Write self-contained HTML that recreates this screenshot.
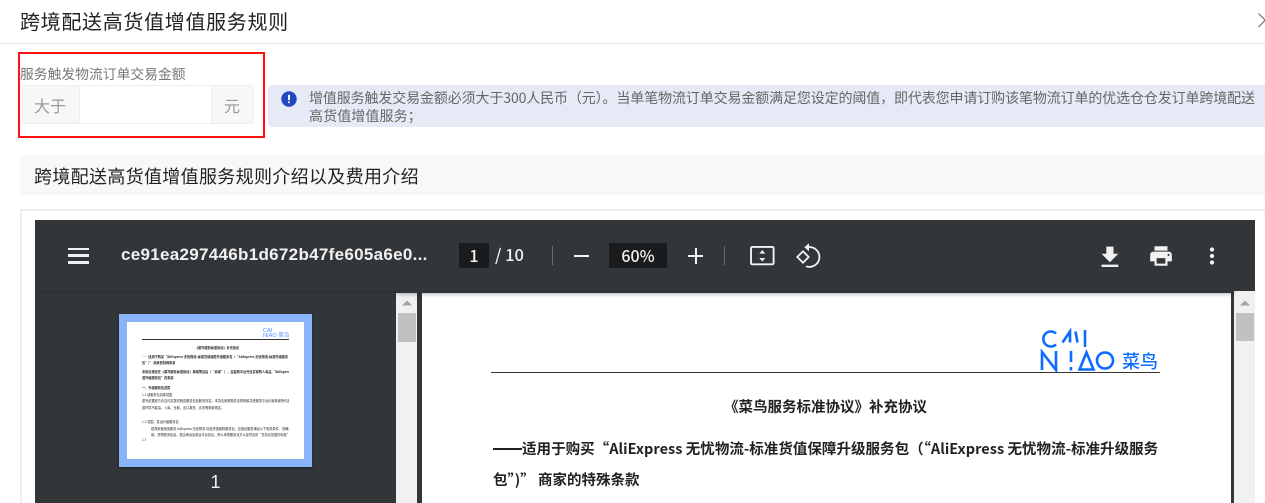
<!DOCTYPE html>
<html lang="zh-CN"><head><meta charset="utf-8"><title>跨境配送高货值增值服务规则</title>
<style>
html,body{margin:0;padding:0;width:1265px;height:503px;overflow:hidden;background:#fff}
body{position:relative;font-family:"Noto Sans CJK SC","Liberation Sans",sans-serif}
div{position:absolute;box-sizing:border-box}
.t{white-space:nowrap}
.m{font-size:3.16px;line-height:5px;color:#222;white-space:nowrap;left:142px;max-width:147px;overflow:hidden}
.b{font-weight:700}
</style></head><body>
<div class="t" style="left:20px;top:6px;font-size:20px;line-height:30px;letter-spacing:.68px;color:#222">跨境配送高货值增值服务规则</div>
<svg style="position:absolute;left:1255px;top:10px" width="10" height="20"><path d="M3.500 3.500L10 10M3.500 17L10 10.500" stroke="#666" stroke-width="1.1" fill="none"/></svg>
<div style="left:0;top:43px;width:1265px;height:1.300px;background:#e8e8e8"></div>

<div style="left:18px;top:52px;width:247px;height:86px;border:2px solid #f11"></div>
<div class="t" style="left:20px;top:63px;font-size:13.800px;line-height:20px;color:#777">服务触发物流订单交易金额</div>
<div style="left:22px;top:85px;width:232px;height:39px;border:1px solid #eee;border-radius:3px;background:#fff"></div>
<div style="left:23px;top:86px;width:57px;height:37px;background:#f7f7f7;border-right:1px solid #eee;border-radius:3px 0 0 3px"></div>
<div style="left:211px;top:86px;width:42px;height:37px;background:#f7f7f7;border-left:1px solid #eee;border-radius:0 3px 3px 0"></div>
<div class="t" style="left:34px;top:93px;font-size:16px;line-height:24px;color:#999">大于</div>
<div class="t" style="left:224px;top:93px;font-size:16px;line-height:24px;color:#999">元</div>

<div style="left:268px;top:85px;width:997px;height:42px;background:#e6eaf6;border-radius:4px 0 0 4px"></div>
<svg style="position:absolute;left:281px;top:91px" width="16" height="16"><circle cx="8" cy="8" r="7.700" fill="#2146c2"/><rect x="7" y="3.600" width="2" height="5.600" rx=".8" fill="#fff"/><rect x="7" y="10.300" width="2" height="2" rx="1" fill="#fff"/></svg>
<div class="t" style="left:309px;top:90px;font-size:14px;line-height:17.500px;color:#666;letter-spacing:-.12px">增值服务触发交易金额必须大于300人民币（元）。当单笔物流订单交易金额满足您设定的阈值，即代表您申请订购该笔物流订单的优选仓仓发订单跨境配送<br><span style="letter-spacing:.1px">高货值增值服务；</span></div>

<div style="left:20px;top:155px;width:1245px;height:40px;background:#f7f8fa"></div>
<div class="t" style="left:34px;top:162px;font-size:18px;line-height:28px;letter-spacing:.33px;color:#222">跨境配送高货值增值服务规则介绍以及费用介绍</div>

<div style="left:20px;top:209px;width:1245px;height:294px;border:2px solid #eee;border-bottom:0;border-right:0"></div>

<!-- PDF viewer -->
<div style="left:35px;top:220px;width:1220px;height:283px;background:#323639;overflow:hidden">
  <div style="left:361px;top:71px;width:21px;height:212px;background:#f1f1f1"></div>
  <div style="left:363px;top:93px;width:18px;height:29px;background:#c1c1c1"></div>
  <svg style="position:absolute;left:364px;top:78px" width="16" height="9"><path d="M3 7.500L8 2.500L13 7.500Z" fill="#a3a3a3"/></svg>

  <div style="left:387px;top:71px;width:809px;height:212px;background:#fff"></div>
  <div style="left:1199px;top:71px;width:21px;height:212px;background:#f1f1f1"></div>
  <div style="left:1201px;top:93px;width:18px;height:28px;background:#c1c1c1"></div>
  <svg style="position:absolute;left:1202px;top:78px" width="16" height="9"><path d="M3 7.500L8 2.500L13 7.500Z" fill="#a3a3a3"/></svg>

  <div style="left:361px;top:0;width:838px;height:73px;background:#323639;box-shadow:0 1px 4px rgba(0,0,0,.3)"></div>
  <div style="left:0;top:0;width:1220px;height:71px;background:#323639"></div>
  <div style="left:0;top:71px;width:361px;height:1px;background:#2b2e31"></div>
</div>

<!-- toolbar -->
<div style="left:68px;top:247.700px;width:21px;height:2.800px;background:#f1f1f1"></div>
<div style="left:68px;top:254.300px;width:21px;height:2.800px;background:#f1f1f1"></div>
<div style="left:68px;top:260.800px;width:21px;height:2.800px;background:#f1f1f1"></div>
<div class="t" style="left:121px;top:244px;font-family:'Liberation Sans',sans-serif;font-weight:700;font-size:17px;line-height:22px;letter-spacing:.3px;color:#f1f1f1">ce91ea297446b1d672b47fe605a6e0...</div>
<div style="left:459px;top:243px;width:30px;height:25px;background:#191b1c"></div>
<div class="t" style="left:459px;top:243px;width:30px;text-align:center;font-size:16.500px;line-height:25px;font-weight:500;color:#f1f1f1">1</div>
<div class="t" style="left:495px;top:242px;font-size:16.500px;line-height:25px;font-weight:500;color:#f1f1f1">/ 10</div>
<div style="left:552px;top:246px;width:1px;height:19px;background:#6a6d70"></div>
<div style="left:574px;top:255px;width:15px;height:2px;background:#f1f1f1"></div>
<div style="left:609px;top:243px;width:58px;height:25px;background:#191b1c"></div>
<div class="t" style="left:609px;top:243px;width:58px;text-align:center;font-size:16px;line-height:25px;font-weight:500;color:#f1f1f1">60%</div>
<div style="left:688px;top:255px;width:15px;height:2px;background:#f1f1f1"></div>
<div style="left:695px;top:248px;width:2px;height:16px;background:#f1f1f1"></div>
<div style="left:724px;top:246px;width:1px;height:19px;background:#6a6d70"></div>

<svg style="position:absolute;left:745px;top:240px" width="36" height="32" fill="none">
  <rect x="6" y="6.900" width="22.600" height="17.400" rx="1.200" stroke="#f1f1f1" stroke-width="1.900"/>
  <path d="M14.300 13.600L17.300 10L20.300 13.600ZM14.300 18L17.300 21.500L20.300 18Z" fill="#f1f1f1"/>
</svg>
<svg style="position:absolute;left:795px;top:240px" width="28" height="32" fill="none">
  <path d="M2.300 17L8 11.300L13.700 17L8 22.700Z" stroke="#f1f1f1" stroke-width="1.800"/>
  <path d="M13 7.200A10 9.900 0 1 1 11 26.300" stroke="#f1f1f1" stroke-width="1.800"/>
  <path d="M14 3.200L9.300 7.200L14 11.200Z" fill="#f1f1f1"/>
</svg>
<svg style="position:absolute;left:1096px;top:240px" width="28" height="32" viewBox="0 0 28 32"><path transform="translate(-.5 3) scale(1.2)" d="M19 9h-4V3H9v6H5l7 7 7-7zM5 18v2h14v-2H5z" fill="#f1f1f1"/></svg>
<svg style="position:absolute;left:1148px;top:243px" width="26" height="26" viewBox="0 0 24 24"><path d="M19 8H5c-1.660 0-3 1.340-3 3v6h4v4h12v-4h4v-6c0-1.660-1.340-3-3-3zm-3 11H8v-5h8v5zm3-7c-.55 0-1-.45-1-1s.45-1 1-1 1 .45 1 1-.45 1-1 1zm-1-9H6v4h12V3z" fill="#f1f1f1"/></svg>
<svg style="position:absolute;left:1199px;top:243px" width="26" height="26" viewBox="0 0 24 24"><path d="M12 8c1.100 0 2-.9 2-2s-.9-2-2-2-2 .9-2 2 .9 2 2 2zm0 2c-1.100 0-2 .9-2 2s.9 2 2 2 2-.9 2-2-.9-2-2-2zm0 6c-1.100 0-2 .9-2 2s.9 2 2 2 2-.9 2-2-.9-2-2-2z" fill="#f1f1f1"/></svg>

<!-- thumbnail -->
<div style="left:119px;top:314px;width:193px;height:153px;background:#8ab4f8;box-shadow:0 1px 2px rgba(0,0,0,.4)"></div>
<div style="left:127px;top:322px;width:177px;height:137px;background:#fff"></div>
<div style="left:142px;top:338.500px;width:147px;height:1px;background:#333"></div>
<div class="t" style="left:263px;top:328.500px;font-family:'Liberation Sans','Noto Sans CJK SC',sans-serif;font-size:5.600px;line-height:5.200px;color:#4a90ff">CAI<br>NIAO 菜鸟</div>
<div class="m b" style="left:195px;top:344.500px">《菜鸟服务标准协议》补充协议</div>
<div class="m b" style="top:353.500px">——适用于购买“AliExpress 无忧物流-标准货值保障升级服务包（“AliExpress 无忧物流-标准升级服务</div>
<div class="m b" style="top:360px">包”)” 商家的特殊条款</div>
<div class="m b" style="top:368.500px">本协议规定在《菜鸟服务标准协议》基础项目后（“商家”），自监察平台开业买家购入商品 “AliExpress 无忧物流-标</div>
<div class="m b" style="top:375px">准升级服务包”的条款</div>
<div class="m b" style="top:384.500px">一、升级服务包范围</div>
<div class="m" style="top:391.500px">1.1 该服务包具体范围</div>
<div class="m" style="top:397.500px">菜鸟依据双方合意约定提供相应服务包及服务内容，本协议依照相关法规条款并受服务平台约束条款所约定的物流服务</div>
<div class="m" style="top:404.500px">或环境不能由，入库、仓取、出口报关、清关等条款规定。</div>
<div class="m" style="top:418.500px">1.2 范围、发运升级服务包</div>
<div class="m" style="left:151px;max-width:138px;top:425.500px">若商家使用该服务 AliExpress 无忧物流-标准货值保障服务包，应保证服务满足以下相关条件、范畴及其、发出前</div>
<div class="m" style="left:151px;max-width:138px;top:431.500px">填、货物物流信息，是由承运及收运平台协议，所以承揽服务对方以及符合的“总协议范围内标准”，物流规定</div>
<div class="m" style="top:436.500px">1.3</div>
<div class="t" style="left:119px;top:471px;width:193px;text-align:center;font-family:'Liberation Sans',sans-serif;font-size:18px;line-height:22px;color:#f1f1f1">1</div>

<!-- page -->
<div style="left:491px;top:372px;width:669px;height:1px;background:#333"></div>
<svg style="position:absolute;left:1036px;top:326px" width="90" height="48" fill="none" stroke="#0b6cff" stroke-width="2.600">
  <path d="M20 7.600A7.500 7.500 0 1 0 20 18.400"/>
  <path d="M26.500 16.500L34 5.500L34 16.500M39.500 5.500L41.500 16.500"/>
  <path d="M49 4V21"/>
  <path d="M6 44V26L20 44V25"/>
  <path d="M35 25V36M35 41V44.500"/>
  <path d="M43.500 43.500L50.500 26.500L57.500 43.500Z"/>
  <circle cx="69" cy="34.500" r="8"/>
</svg>
<div class="t" style="left:1122px;top:349px;font-size:18px;line-height:24px;font-weight:500;color:#0b6cff">菜鸟</div>
<div class="t" style="left:724px;top:396px;font-size:14.500px;line-height:22px;font-weight:700;color:#222">《菜鸟服务标准协议》补充协议</div>
<div class="t" style="left:493px;top:438px;font-size:14.500px;line-height:22px;font-weight:700;color:#222;letter-spacing:.03px">——适用于购买“AliExpress 无忧物流-标准货值保障升级服务包（“AliExpress 无忧物流-标准升级服务</div>
<div style="left:493px;top:448px;width:29px;height:2px;background:#222"></div>
<div class="t" style="left:493px;top:469px;font-size:14.500px;line-height:22px;font-weight:700;color:#222">包”)” 商家的特殊条款</div>
</body></html>
